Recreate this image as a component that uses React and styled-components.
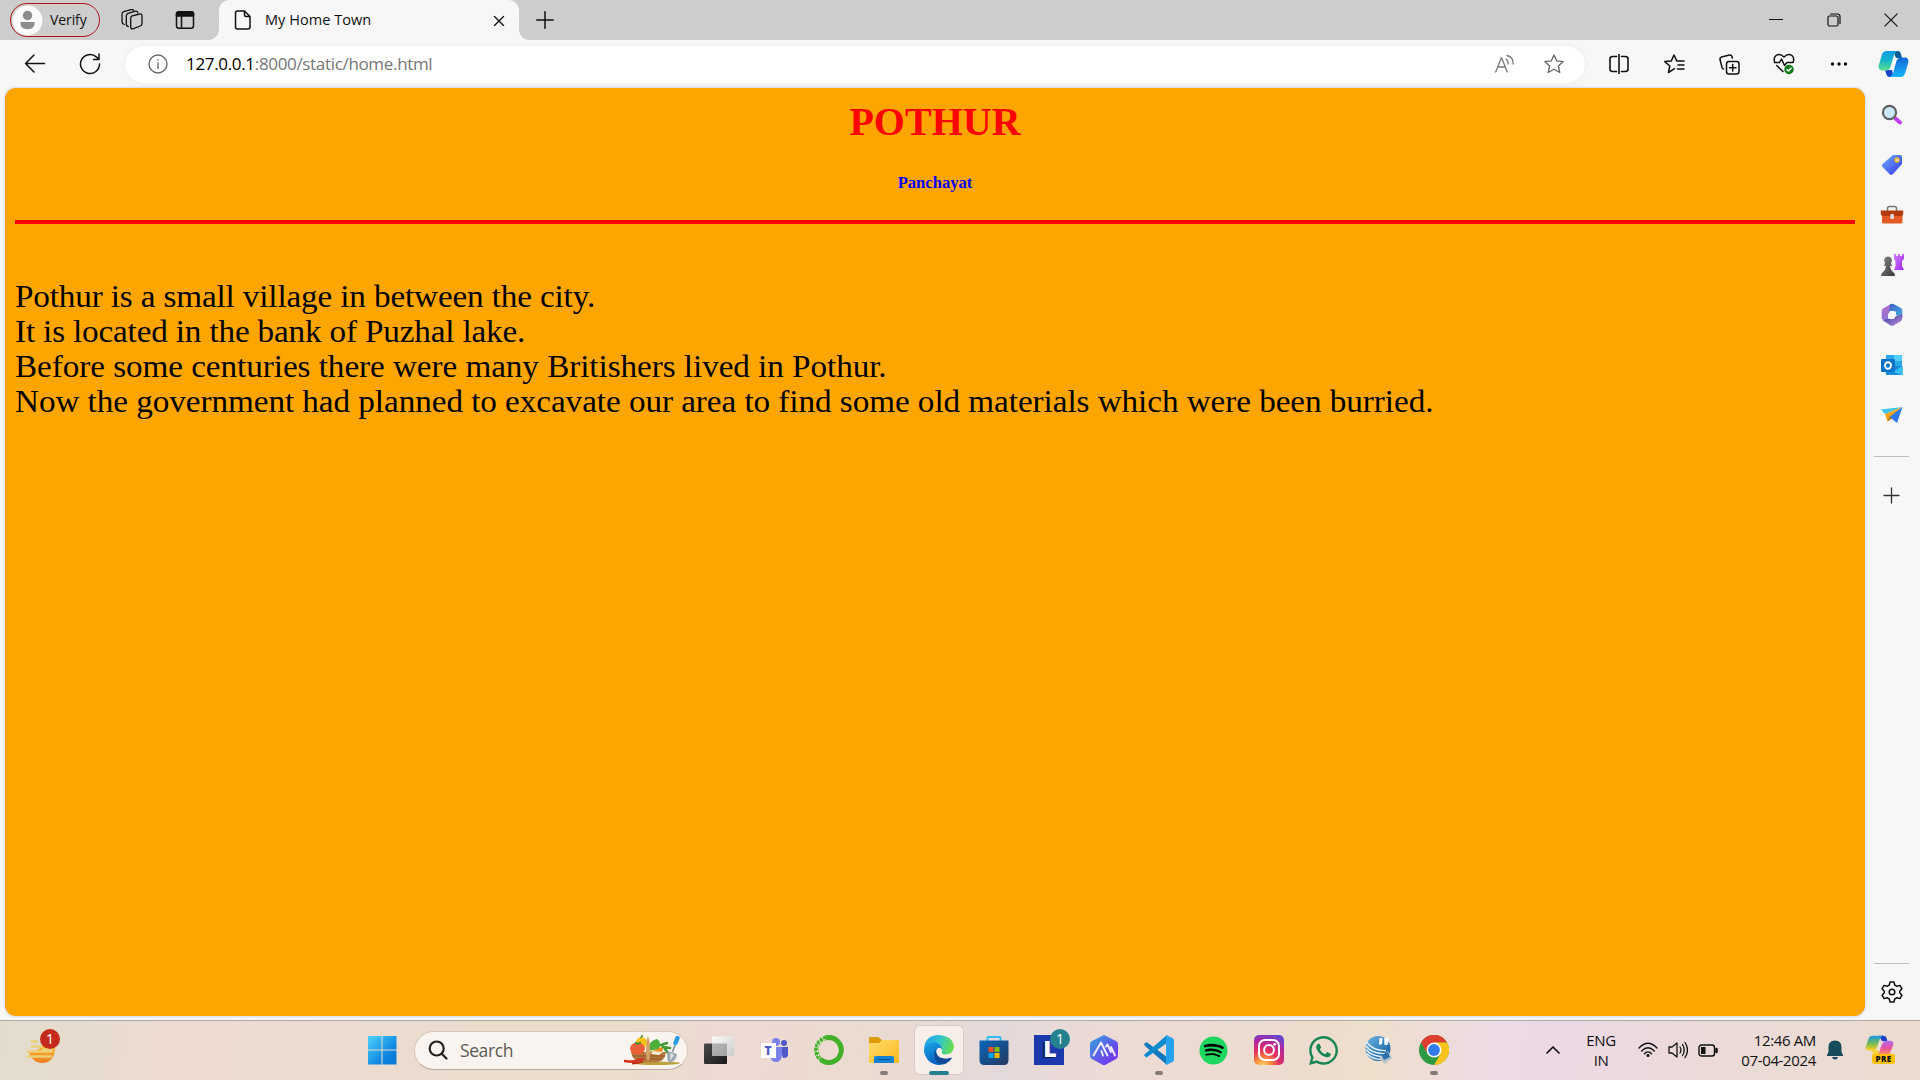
import React from "react";
import styled, { createGlobalStyle } from "styled-components";
import { FaSpotify, FaWhatsapp } from "react-icons/fa";

const ui = `"Open Sans", "Noto Sans", sans-serif`;

const Global = createGlobalStyle`
  html, body { margin: 0; padding: 0; overflow: hidden; }
  * { box-sizing: border-box; }
  svg { display: block; flex: none; }
`;

const Screen = styled.div`
  width: 1920px;
  height: 1080px;
  display: flex;
  flex-direction: column;
  background: #f7f7f7;
  font-family: ${ui};
  color: #111;
  overflow: hidden;
`;

/* ---------- tab strip ---------- */
const TabStrip = styled.header`
  height: 40px;
  background: #cdcdcd;
  display: flex;
  align-items: center;
  padding-left: 10px;
`;
const Profile = styled.div`
  width: 90px;
  height: 34px;
  border: 1.5px solid #b3151b;
  border-radius: 17px;
  display: flex;
  align-items: center;
  gap: 7px;
  padding-left: 1px;
  margin-right: 20px;
`;
const Label = styled.span`
  font-size: ${(p) => p.$size || 14}px;
  letter-spacing: ${(p) => p.$track || 0}px;
  color: ${(p) => p.$color || "#111"};
  line-height: 20px;
  white-space: nowrap;
`;
const StripIcon = styled.div`
  width: 24px;
  height: 24px;
  display: flex;
  align-items: center;
  justify-content: center;
  margin-right: ${(p) => p.$after || 0}px;
`;
const Tab = styled.div`
  position: relative;
  width: 300px;
  height: 40px;
  border-radius: 10px 10px 0 0;
  background: #f7f7f7;
  display: flex;
  align-items: center;
  padding: 0 14px 0 15px;
  gap: 13px;
  &::before, &::after {
    content: "";
    position: absolute;
    bottom: 0;
    width: 10px;
    height: 10px;
  }
  &::before { left: -10px; background: radial-gradient(circle at 0 0, transparent 9.5px, #f7f7f7 10px); }
  &::after { right: -10px; background: radial-gradient(circle at 100% 0, transparent 9.5px, #f7f7f7 10px); }
  > svg:last-child { margin-left: auto; }
`;
const WindowButtons = styled.div`
  margin-left: auto;
  display: flex;
`;
const WindowButton = styled.div`
  width: 57.5px;
  height: 40px;
  display: flex;
  align-items: center;
  justify-content: center;
`;

/* ---------- toolbar ---------- */
const Toolbar = styled.div`
  height: 48px;
  display: flex;
  align-items: center;
  padding-left: 7px;
`;
const Slot = styled.div`
  width: ${(p) => p.$w || 55}px;
  height: 48px;
  display: flex;
  align-items: center;
  justify-content: center;
`;
const Address = styled.div`
  width: 1460px;
  height: 37px;
  border-radius: 19px;
  background: #fff;
  box-shadow: 0 0 5px rgba(0, 0, 0, 0.06);
  margin-left: 8px;
  display: flex;
  align-items: center;
  padding: 0 21px 0 23px;
`;
const Url = styled.span`
  font-size: 17px;
  line-height: 24px;
  letter-spacing: -0.33px;
  color: #767676;
  margin-left: 18px;
  margin-right: auto;
  padding-bottom: 1px;
  b { font-weight: 400; color: #000; }
`;
const AddressIcon = styled.div`
  margin-left: ${(p) => p.$gap || 0}px;
`;

/* ---------- page ---------- */
const Main = styled.div`
  height: 932px;
  display: flex;
  padding-left: 5px;
`;
const Page = styled.main`
  width: 1860px;
  height: 928px;
  border-radius: 11px;
  background: #ffa500;
  box-shadow: 0 0 3px rgba(60, 80, 140, 0.35);
  padding: 11px 10px 10px;
  font-family: "Liberation Serif", serif;
`;
const Title = styled.h1`
  margin: 0;
  font-size: 40px;
  line-height: 46px;
  color: #f00;
  text-align: center;
`;
const Subtitle = styled.h5`
  margin: 28px 0 0;
  font-size: 16.6px;
  line-height: 19px;
  color: #00f;
  text-align: center;
`;
const Rule = styled.hr`
  margin: 28px 0 55px;
  border: 0;
  height: 4px;
  background: #f00;
`;
const Line = styled.p`
  margin: 0;
  width: max-content;
  font-size: 31px;
  line-height: 35px;
  letter-spacing: ${(p) => p.$track}px;
  color: #000;
  white-space: nowrap;
  transform: scaleX(1.07);
  transform-origin: 0 0;
`;

const Sidebar = styled.aside`
  width: 53px;
  height: 928px;
  padding: 2px 0 13px;
  display: flex;
  flex-direction: column;
  align-items: center;
`;
const SideItem = styled.div`
  height: 50px;
  display: flex;
  align-items: center;
  justify-content: center;
`;
const Divider = styled.div`
  width: 35px;
  height: 1px;
  background: #bdbdbd;
  margin: ${(p) => p.$m};
`;

/* ---------- taskbar ---------- */
const Taskbar = styled.footer`
  height: 60px;
  border-top: 1px solid #b2aaa4;
  display: flex;
  align-items: center;
  padding-left: 13px;
  background: linear-gradient(96deg, #e3dccd 0, #e5dccd 80px, #eddccf 160px, #ecdccf 400px, #ebdccc 620px, #eddad4 730px, #ecdbcf 850px, #e4d9da 1000px, #ecdad5 1110px, #eedecc 1370px, #eedae5 1490px, #edd9e4 1560px, #ebdad8 1700px, #ebdcd2 1860px);
`;
const Cell = styled.div`
  position: relative;
  width: 55px;
  height: 59px;
  padding-bottom: 1px;
  display: flex;
  align-items: center;
  justify-content: center;
`;
const Tile = styled.div`
  width: 48px;
  height: 48px;
  border-radius: 5px;
  background: #f7eee9;
  box-shadow: 0 0 1px 1px rgba(120, 90, 80, 0.12);
  display: flex;
  align-items: center;
  justify-content: center;
`;
const Running = styled.i`
  position: absolute;
  bottom: 5px;
  left: 50%;
  width: ${(p) => (p.$active ? 20 : 8)}px;
  height: 4px;
  border-radius: 2px;
  transform: translateX(-50%);
  background: ${(p) => (p.$active ? "#25808f" : "#857b77")};
`;
const Badge = styled.span`
  position: absolute;
  top: ${(p) => p.$top}px;
  left: ${(p) => p.$left}px;
  width: 20px;
  height: 20px;
  border-radius: 50%;
  background: ${(p) => p.$bg};
  color: #fff;
  font-size: 14px;
  line-height: 20px;
  text-align: center;
`;
const Search = styled.div`
  width: 274px;
  height: 39px;
  border-radius: 20px;
  background: #f9f4f0;
  border: 1px solid #d9c9bd;
  border-bottom-color: #baaaa0;
  margin: 0 3px 1px 5px;
  display: flex;
  align-items: center;
  padding: 0 6px 0 13px;
  > svg:last-child { margin-left: auto; }
`;
const SearchText = styled.span`
  font-size: 17.5px;
  letter-spacing: -0.4px;
  color: #5b5856;
  margin-left: 12px;
`;
const Gap = styled.div`
  width: ${(p) => p.$w}px;
`;
const Tray = styled.div`
  margin-left: auto;
  height: 59px;
  display: flex;
  align-items: center;
  padding: 0 25px 1px 0;
`;
const TwoLines = styled.div`
  width: ${(p) => p.$w}px;
  text-align: ${(p) => p.$align};
  font-size: 15px;
  line-height: 20px;
  letter-spacing: ${(p) => p.$track || 0}px;
  white-space: nowrap;
  padding-bottom: 1px;
`;
const TrayIcon = styled.div`
  width: ${(p) => p.$w}px;
  display: flex;
  justify-content: center;
`;

const Ico = ({ w = 20, h, s = "#111", sw = 1.4, box, children }) => (
  <svg width={w} height={h || w} viewBox={box || `0 0 ${w} ${h || w}`} fill="none" stroke={s} strokeWidth={sw} strokeLinecap="round" strokeLinejoin="round">
    {children}
  </svg>
);

const Grad = ({ id, a, b, c, x2 = 1, y2 = 1 }) => (
  <linearGradient id={id} x1="0" y1="0" x2={x2} y2={y2}>
    <stop offset="0" stopColor={a} />
    {c && <stop offset=".5" stopColor={c} />}
    <stop offset="1" stopColor={b} />
  </linearGradient>
);

const starPath = "M10 1 L12.7 6.9 L19.2 7.6 L14.4 12 L15.8 18.5 L10 15.3 L4.2 18.5 L5.6 12 L.8 7.6 L7.3 6.9 Z";

function Tabs() {
  return (
    <TabStrip>
      <Profile>
        <svg width="31" height="31" viewBox="0 0 31 31">
          <circle cx="15.5" cy="15.5" r="15" fill="#fafafa" />
          <circle cx="15.5" cy="10.5" r="4.7" fill="#8c8c8c" />
          <path d="M8.5 17h14v1.5c0 3.8-3 5.7-7 5.7s-7-1.900-7-5.700z" fill="#8c8c8c" />
        </svg>
        <Label $size={14} $track={-0.1}>Verify</Label>
      </Profile>
      <StripIcon $after={29}>
        <Ico w={22} sw={1.3}>
          <path d="M10.500 7.200 L18.600 5 Q21 4.600 21 7 V14.500 Q21 16.300 19.200 17 L12.500 19.700 Q9.700 20.500 9.700 17.800 V9 Q9.700 7.600 10.500 7.200 Z" />
          <path d="M7.300 17.500 Q5.300 17.300 5.300 15 V7 Q5.300 5 7 4.400 L14.500 2.200 Q16.500 2 16.800 3.600" />
          <path d="M3.300 15.500 Q1 14.800 1 12.500 V5.500 Q1 3.500 2.800 2.700 L10 .7 Q12 .3 12.600 1.300" />
        </Ico>
      </StripIcon>
      <StripIcon $after={22}>
        <Ico w={20} sw={1.5}>
          <rect x="1.500" y="1.800" width="17" height="16.500" rx="2.500" />
          <path d="M1.500 6 V4 Q1.500 1.800 4 1.800 H16 Q18.500 1.800 18.500 4 V6 Z" fill="#111" />
          <path d="M6.500 6 V18" />
        </Ico>
      </StripIcon>
      <Tab>
        <Ico w={18} h={20} sw={1.5}>
          <path d="M3.500 1 H10.500 L16 6.500 V17 Q16 19 14 19 H3.500 Q1.500 19 1.500 17 V3 Q1.500 1 3.500 1 Z M10.500 1 V5 Q10.500 6.500 12 6.500 H16" />
        </Ico>
        <Label $size={14.5} $track={0.04}>My Home Town</Label>
        <Ico w={12} h={11}><path d="M1.500 1.500 L10.500 10.500 M10.500 1.500 L1.500 10.500" /></Ico>
      </Tab>
      <Gap $w={17} />
      <Ico w={18} sw={1.5}><path d="M9 .8 V17.200 M.8 9 H17.200" /></Ico>
      <WindowButtons>
        <WindowButton><Ico w={14} sw={1.2}><path d="M.5 6.500 H13.500" /></Ico></WindowButton>
        <WindowButton>
          <Ico w={14} sw={1.2}>
            <rect x="1" y="3" width="10" height="10" rx="1.500" />
            <path d="M3.500 1 H10.500 Q13 1 13 3.500 V10.500" />
          </Ico>
        </WindowButton>
        <WindowButton><Ico w={14} sw={1.2}><path d="M.8 .8 L13.200 13.200 M13.200 .8 L.8 13.200" /></Ico></WindowButton>
      </WindowButtons>
    </TabStrip>
  );
}

function NavBar() {
  return (
    <Toolbar>
      <Slot><Ico w={22} sw={1.5}><path d="M20.500 10.500 H1.500 M10 2 L1.500 10.500 L10 19" /></Ico></Slot>
      <Slot>
        <Ico w={22} sw={1.5}><path d="M20.500 11 A9.500 9.500 0 1 1 17.500 4.100 L20 6.300 M20 1 V6.500 H14.500" /></Ico>
      </Slot>
      <Address>
        <Ico w={20} s="#6c6c6c"><circle cx="10" cy="10" r="9" /><path d="M10 9 V14.500 M10 5.600 V5.900" /></Ico>
        <Url><b>127.0.0.1</b>:8000/static/home.html</Url>
        <AddressIcon>
          <Ico w={20} s="#777" sw={1.300}><path d="M.7 18 L6.500 3.500 L12.300 18 M2.700 13 H10.300 M11 5 Q13.500 7 13 10 M12 1.500 Q18.500 3 18 10" /></Ico>
        </AddressIcon>
        <AddressIcon $gap={29}><Ico s="#666" sw={1.3}><path d={starPath} /></Ico></AddressIcon>
      </Address>
      <Gap $w={6.5} />
      <Slot>
        <Ico w={20} sw={1.600}><path d="M7.500 2.500 H3.500 Q1 2.500 1 5 V15 Q1 17.500 3.500 17.500 H7.500 M12.500 2.500 H16.500 Q19 2.500 19 5 V15 Q19 17.500 16.500 17.500 H12.500 M10 .5 V19.500" /></Ico>
      </Slot>
      <Slot>
        <Ico w={21} h={20} sw={1.500}><path d="M10.500 14.700 L4.500 18.500 L5.800 12 L.8 7.600 L7.300 6.900 L10 1 L12.700 6.900 H20 M14 11 H20 M13.500 15 H20" /></Ico>
      </Slot>
      <Slot>
        <Ico w={21} sw={1.500}>
          <rect x="7.500" y="7.500" width="12.500" height="12.500" rx="2.500" />
          <path d="M13.700 10.500 V17 M10.500 13.700 H17 M4.500 15 Q3.500 15 3 13.500 L1 5.500 Q.7 3.500 2.500 3 L10.500 1 Q12.500 .8 13 2.500 L13.300 4" />
        </Ico>
      </Slot>
      <Slot>
        <Ico w={22} sw={1.500}>
          <path d="M1.700 9 Q.2 5 3 2.500 Q7 -.2 11 4 Q15 -.2 19 2.500 Q21.500 5 20.300 9 M1.500 9.500 H6.500 L8.500 6 L11.500 12.500 L14 9.500 H20 M3.700 12.500 L10 18.500" />
          <circle cx="16" cy="16.500" r="4.700" fill="#0f7b16" stroke="none" />
          <path d="M14 16.700 L15.400 18 L18 15.200" stroke="#fff" />
        </Ico>
      </Slot>
      <Slot><Ico w={18} s="none"><g fill="#111"><circle cx="2.500" cy="9" r="1.700" /><circle cx="9" cy="9" r="1.700" /><circle cx="15.500" cy="9" r="1.700" /></g></Ico></Slot>
      <Slot $w={53}><Copilot w={31} h={28} /></Slot>
    </Toolbar>
  );
}

const Copilot = ({ w, h, pre }) => (
  <svg width={w} height={h} viewBox="0 0 31 28" preserveAspectRatio="none">
    <defs>
      {pre ? (
        <>
          <Grad id="cpA" a="#1998e5" c="#6cb85a" b="#ffd21c" x2={0} />
          <Grad id="cpB" a="#b46cf5" c="#e553a1" b="#ff9b59" x2={0} />
        </>
      ) : (
        <>
          <Grad id="coA" a="#0c9ee8" c="#17b5c7" b="#60df91" x2={0} />
          <Grad id="coB" a="#1267d5" b="#17b6fa" x2={0} />
        </>
      )}
    </defs>
    <path d="M15 1 H19.500 Q22.300 1 23 4 L24 8 H18 L15 1Z" fill={pre ? "#183fc4" : "#0b5e91"} />
    <path d="M15.500 27 H12 Q9 27 8.300 24 L7 20 H14Z" fill={pre ? "#ffd33f" : "#1246c8"} />
    <path d="M8.500 1 H19 Q16.700 2 15.800 5.500 L12.800 16 Q11.700 20.500 8 20.500 H4.500 Q-.6 20.500 1 14.500 L3.800 5 Q5 1 8.500 1Z" fill={`url(#${pre ? "cpA" : "coA"})`} />
    <path d="M22.500 27 H12 Q14.300 26 15.200 22.500 L18.200 12 Q19.300 7.500 23 7.500 H26.500 Q31.600 7.500 30 13.500 L27.200 23 Q26 27 22.500 27Z" fill={`url(#${pre ? "cpB" : "coB"})`} />
  </svg>
);

function SideIcons() {
  return (
    <Sidebar>
      <SideItem>
        <svg width="22" height="22" viewBox="0 0 22 22">
          <path d="M14.500 14.500 L19 18.500" stroke="#c13df1" strokeWidth="4" strokeLinecap="round" />
          <circle cx="8.500" cy="8.500" r="6.600" fill="#c9e8fc" stroke="#626262" strokeWidth="2.200" />
        </svg>
      </SideItem>
      <SideItem>
        <svg width="22" height="22" viewBox="0 0 22 22">
          <defs><Grad id="tag" a="#69b3ff" b="#3a31ef" /></defs>
          <path d="M12 1 H19 Q21 1 21 3 V10 L11.500 20.500 Q10 21.500 8.700 20.300 L1.300 12.800 Q.3 11.500 1.300 10.300Z" fill="url(#tag)" />
          <circle cx="16" cy="6" r="2" fill="#d9d4ce" stroke="#f4bd16" strokeWidth="1.300" />
        </svg>
      </SideItem>
      <SideItem>
        <svg width="24" height="20" viewBox="0 0 24 20">
          <path d="M7.500 6 V3.500 Q7.500 1.500 9.500 1.500 H14.500 Q16.500 1.500 16.500 3.500 V6" fill="none" stroke="#777" strokeWidth="1.500" />
          <rect x="2" y="6" width="20.500" height="12.500" rx="1.500" fill="#e65a26" />
          <path d="M.8 5.500 H23.200 V9 Q23 11 20 11 H4 Q1 11 .8 9Z" fill="#b23a0c" />
          <rect x="10.300" y="9" width="3.600" height="5" rx="1" fill="#ddd" />
        </svg>
      </SideItem>
      <SideItem>
        <svg width="24" height="24" viewBox="0 0 24 24">
          <defs><Grad id="pawn" a="#898989" b="#383838" /><Grad id="rook" a="#cc83ff" b="#a522f0" /></defs>
          <path d="M14 1 H16 V3 H18 V1 H20 V3 H22 V1 H24 V6 L22 8 V13 L24 17 H14 L15.500 13 V8 L14 6Z" fill="url(#rook)" />
          <path d="M8 3.500 A4 4 0 0 1 11 10 L12 13 H10 Q10.500 17 13 19 Q15 20 15 23 H1 Q1 20 3 19 Q5.500 17 6 13 H4 L5 10 A4 4 0 0 1 8 3.500Z" fill="url(#pawn)" />
        </svg>
      </SideItem>
      <SideItem>
        <svg width="22" height="24" viewBox="0 0 22 24">
          <defs><Grad id="m1" a="#b36acb" b="#8c78d7" x2={0} /><Grad id="m2" a="#3f5cc5" b="#3fb6e4" /><Grad id="m3" a="#303aa2" b="#ba8dd7" /></defs>
          <path d="M10 1 L2 5.500 Q.7 6.500 .7 8 V16 L7 19 L7 12 L14 6Z" fill="url(#m1)" />
          <path d="M9 1.600 Q11 .3 13 1.200 L20 5 Q21.300 6 21.300 8 V15 L15 12 L15 8.500 L8 9Z" fill="url(#m2)" />
          <path d="M1.500 17 L9.500 22.500 Q11 23.300 13 22.300 L20 18 Q21.300 17 21.300 14 V11 L14 13.500 L9 15.500Z" fill="url(#m3)" />
          <path d="M9 8 H13 L15.200 12 L13 16 H9 L6.800 12Z" fill="#f7f7f7" />
        </svg>
      </SideItem>
      <SideItem>
        <svg width="22" height="22" viewBox="0 0 22 22">
          <rect x="5" y="1" width="16" height="13" fill="#28a8ea" />
          <path d="M13 1 H21 V7 H13Z" fill="#50d0fa" />
          <path d="M4 12 H21.500 V21 H5Z" fill="#168fdb" />
          <path d="M21.500 12 L12 18 L21.500 21Z" fill="#37c1f2" />
          <rect x="0" y="5" width="14" height="13" rx="1" fill="#0872c9" />
          <ellipse cx="7" cy="11.500" rx="3" ry="3.300" fill="none" stroke="#fff" strokeWidth="1.900" />
        </svg>
      </SideItem>
      <SideItem>
        <svg width="22" height="18" viewBox="0 0 22 18">
          <path d="M21.500 1 L0 3.500 L4 8Z" fill="#3cc4f3" />
          <path d="M21.500 1 L4 8 L6.500 15.500Z" fill="#f1a51b" />
          <path d="M21.500 1 L16 17 L8.500 11Z" fill="#2d79ec" />
          <path d="M6.500 15.500 L8.500 10.500 L11 12.500Z" fill="#b97222" />
        </svg>
      </SideItem>
      <Divider $m="16px 0 30px" />
      <Ico w={17} s="#333" sw={1.300}><path d="M8.500 1 V16 M1 8.500 H16" /></Ico>
      <Divider $m="auto 0 17px" />
      <Ico w={22} sw={1.500}>
        <path d="M9 1 H13 L13.700 4 L16 5.300 L19 4.400 L21 7.800 L18.800 10 V12 L21 14.200 L19 17.600 L16 16.700 L13.700 18 L13 21 H9 L8.300 18 L6 16.700 L3 17.600 L1 14.200 L3.200 12 V10 L1 7.800 L3 4.400 L6 5.300 L8.300 4Z" />
        <circle cx="11" cy="11" r="2.800" />
      </Ico>
    </Sidebar>
  );
}

const Weather = () => (
  <svg width="30" height="28" viewBox="0 0 30 28">
    <defs><Grad id="sun" a="#f9c12f" b="#ed7a20" x2={0} /></defs>
    <path d="M2 15 Q14 16 16 9 H29 Q30 27 15 27 Q6 26 2 15Z" fill="url(#sun)" />
    <path d="M6 5.500 H11 M6 10.500 H16 M1.500 15.500 H24 Q27 15.500 25.500 13.500 Q22 12 17 14 M1.500 20.500 H25" stroke="#ecd078" strokeWidth="2.500" strokeLinecap="round" fill="none" />
  </svg>
);

const Windows = () => (
  <svg width="30" height="30" viewBox="0 0 30 30">
    <defs><linearGradient id="win" x1="0" y1="0" x2="30" y2="30" gradientUnits="userSpaceOnUse"><stop stopColor="#50d5ff" /><stop offset=".7" stopColor="#0b82dd" /><stop offset="1" stopColor="#0875d1" /></linearGradient></defs>
    <path d="M1 1H14.500V14.500H1Z M15.500 1H29.500V14.500H15.500Z M1 15.500H14.500V29.500H1Z M15.500 15.500H29.500V29.500H15.500Z" fill="url(#win)" />
  </svg>
);

const Basket = () => (
  <svg width="57" height="32" viewBox="0 0 57 32">
    <ellipse cx="32" cy="29.300" rx="24" ry="1.800" fill="#c0a23c" />
    <path d="M7 18 H42 Q41 28.500 30 28.500 H18 Q8 27 7 18Z" fill="#b8783f" />
    <path d="M9 22 H41 M12 25 H38" stroke="#8b5226" />
    <circle cx="17.500" cy="8.500" r="5.500" fill="#f6c416" />
    <path d="M17 4 L18.500 1" stroke="#47842d" strokeWidth="1.600" />
    <ellipse cx="13.500" cy="14.500" rx="7.500" ry="6" fill="#ec6038" />
    <path d="M11 8.500 L13.500 10 L17 8.500" stroke="#3f8a34" strokeWidth="1.600" fill="none" />
    <path d="M24 17 Q25 6 33 5 Q38 8 35 15Z" fill="#4faf3b" />
    <path d="M26 18 L40 12 L38 18Z" fill="#f38c1b" />
    <path d="M37 11 L43 9 M39 13 L46 14 M41 15 L44 19" stroke="#3f9c35" strokeWidth="2.600" strokeLinecap="round" />
    <path d="M29 17 L39 18 L35 21 L27 20Z" fill="#f5edd2" />
    <path d="M22.500 26 Q21 8 24 2 Q27 8 25.500 26Z" fill="#d2a266" />
    <path d="M53.500 4 L51.500 9" stroke="#2b9be4" strokeWidth="4.500" strokeLinecap="round" />
    <path d="M51 11 L48.500 18" stroke="#8798a5" strokeWidth="1.800" />
    <path d="M44 17 L53 20 Q53 27 45 29 Q42 25 44 17Z" fill="#9caab4" />
    <path d="M46.500 19 L50 21 L46 27Z" fill="#d9e1e4" />
    <path d="M1 27 Q10 29 18 25" stroke="#d8321e" strokeWidth="2.600" fill="none" strokeLinecap="round" />
    <path d="M8 29.500 Q14 29.500 19 27.500" stroke="#bb2015" strokeWidth="1.800" fill="none" />
  </svg>
);

const TaskView = () => (
  <svg width="30" height="30" viewBox="0 0 30 30">
    <defs><Grad id="tv1" a="#4a4a4a" b="#191919" /><Grad id="tv2" a="#fff" b="#c9c9c9" /></defs>
    <rect x="0" y="8.500" width="23" height="20.500" rx="1" fill="url(#tv1)" />
    <rect x="8" y="1.500" width="22" height="19.500" rx="1" fill="url(#tv2)" opacity=".88" />
    <path d="M8 8.500 H23 V21 H8Z" fill="#777" opacity=".4" />
  </svg>
);

const TeamsMark = styled.div`
  position: relative;
  width: 28px;
  height: 28px;
`;
const TeamsLetter = styled.span`
  position: absolute;
  left: 1px;
  top: 7px;
  width: 15px;
  height: 15px;
  background: #fff;
  color: #5059c9;
  font: 800 12px/15px ${ui};
  text-align: center;
`;
const Teams = () => (
  <TeamsMark>
    <svg width="28" height="28" viewBox="0 0 28 28">
      <circle cx="16" cy="6" r="4" fill="#7b83eb" /><circle cx="24" cy="7" r="3" fill="#5059c9" />
      <path d="M20 11 H28 V19 Q28 22 23 22Z" fill="#5059c9" />
      <path d="M10 11 H22 V20 Q21 26 16 26 Q11 26 10 20Z" fill="#7b83eb" />
    </svg>
    <TeamsLetter>T</TeamsLetter>
  </TeamsMark>
);

const Anaconda = () => (
  <svg width="30" height="30" viewBox="0 0 30 30" fill="none" stroke="#43b02a">
    <path d="M12 2.800 A12.500 12.500 0 1 1 7 24.800" strokeWidth="5" />
    <path d="M12 2.800 A12.500 12.500 0 0 0 7 24.800" strokeWidth="4.500" strokeDasharray="3 .7" />
    <path d="M11 4.500 A11.500 11.500 0 0 0 6.500 23" strokeWidth="1.200" strokeDasharray="2 2.500" stroke="#f4efe8" />
    <path d="M9 1.800 A14 14 0 0 0 5 26" strokeWidth="1.200" strokeDasharray="1.500 2.500" stroke="#f4efe8" />
  </svg>
);

const Folder = () => (
  <svg width="30" height="28" viewBox="0 0 30 28">
    <defs><Grad id="fo" a="#ffdc6b" b="#fcb91f" /></defs>
    <path d="M0 2 Q0 1 1 1 H9 L13 4 V10 H0Z" fill="#dd9c05" />
    <path d="M0 7 H10 L13 4 H29 Q30 4 30 5 V27 H0Z" fill="url(#fo)" />
    <path d="M5 27 V22 Q5 20 7 20 H23 Q25 20 25 22 V27Z" fill="#1383d2" /><path d="M9 23.500 H21" stroke="#08579a" />
  </svg>
);

const Edge = () => (
  <svg width="30" height="30" viewBox="0 0 30 30">
    <defs>
      <linearGradient id="eg" x1="0" y1=".2" x2="1" y2=".4"><stop stopColor="#239ee2" /><stop offset=".5" stopColor="#2fc3d2" /><stop offset="1" stopColor="#66df4e" /></linearGradient>
      <Grad id="eb" a="#1aa8e8" b="#0861bf" x2={0.4} />
    </defs>
    <path d="M0 14 Q1 0 15 0 Q29 1 30 12 Q29 20 20 19.500 Q16 18.500 18 16 Q19 10 12 8 Q4 7 0 14Z" fill="url(#eg)" />
    <path d="M0 14 Q3 7 10 7 Q18 8 18 15 Q15 11 12.500 15 Q10 23 17 28 L17.500 29.800 Q4 31 0 17Z" fill="url(#eb)" />
    <path d="M13 13.500 Q7 20 13 27 Q17 31 22 28.500 Q26 26.500 28 23 Q27 22 25.500 23 Q14 25 12.500 16Z" fill="#104c98" />
    <path d="M18 15 Q15 10.500 12.500 15 Q11.500 19 15.500 22 Q20 24.500 27 22.500 L28.500 18 Q24 21 19 19.500 Q16.500 18.500 18 15Z" fill="#f7eee9" />
  </svg>
);

const Store = () => (
  <svg width="30" height="30" viewBox="0 0 30 30">
    <defs><Grad id="st" a="#0a66bb" b="#24395d" /></defs>
    <path d="M8.500 6 V3 Q8.500 2 9.500 2 H20.500 Q21.500 2 21.500 3 V6" fill="none" stroke="#31bdf0" strokeWidth="2" />
    <path d="M.5 5.500 H29.500 V25 Q29.500 30 25 30 H5 Q.5 30 .5 25Z" fill="url(#st)" />
    <path d="M9.500 12 H14.500 V17 H9.500Z" fill="#f25022" /><path d="M15.500 12 H20.500 V17 H15.500Z" fill="#7fba00" />
    <path d="M9.500 18 H14.500 V23 H9.500Z" fill="#00a4ef" /><path d="M15.500 18 H20.500 V23 H15.500Z" fill="#ffb900" />
  </svg>
);

const LTile = styled.div`
  width: 30px;
  height: 30px;
  background: #1b39ad;
  color: #fff;
  font: 800 23px/27px ${ui};
  text-align: center;
  padding-left: 3px;
  text-shadow: -2px 1px 0 #0a1e59;
`;

const Hex = () => (
  <svg width="30" height="32" viewBox="0 0 30 32">
    <defs><Grad id="hx" a="#32a8dd" c="#5c5fe8" b="#7c22f2" /></defs>
    <path d="M15 1 L27 7 Q29 8 29 10 V21 Q29 24 27 25 L17 30.500 Q15 31.500 13 30.500 L3 25 Q1 24 1 21 V10 Q1 8 3 7Z" fill="url(#hx)" />
    <path d="M4.500 21.500 L12 8.500 L18.500 21.500 M12.500 17 L14 21.500 M17 12.500 L18.500 10.500 L22 18 M22 13 L26 21.500" fill="none" stroke="#f2edff" strokeWidth="1.900" strokeLinecap="round" strokeLinejoin="round" />
  </svg>
);

const VSCode = () => (
  <svg width="30" height="30" viewBox="0 0 30 30">
    <path d="M0 9 L2.500 7 L23 22 V30 L1 11Z" fill="#1379bd" />
    <path d="M0 20.500 L2.500 22.500 L23 8 V0 L1 19Z" fill="#0c8bd0" />
    <path d="M22 0 L28.500 3 Q30 4 30 5.500 V24.500 Q30 26 28.500 27 L22 30Z" fill="#27a2ee" />
  </svg>
);

const Spotify = styled.div`
  width: 29px;
  height: 29px;
  border-radius: 50%;
  background: radial-gradient(#000 65%, transparent 67%);
  color: #1ed760;
`;

const Insta = () => (
  <svg width="30" height="30" viewBox="0 0 30 30">
    <defs>
      <radialGradient id="ig" cx=".3" cy="1.050" r="1.100"><stop stopColor="#fedc69" /><stop offset=".25" stopColor="#fb8b3a" /><stop offset=".5" stopColor="#e42f5f" /><stop offset=".8" stopColor="#b027a0" /><stop offset="1" stopColor="#6a45cf" /></radialGradient>
    </defs>
    <rect width="30" height="30" rx="5" fill="url(#ig)" />
    <rect x="5" y="5" width="20" height="20" rx="6" fill="none" stroke="#fff" strokeWidth="2" />
    <circle cx="15" cy="15" r="4.900" fill="none" stroke="#fff" strokeWidth="2" /><circle cx="20.700" cy="9.300" r="1.400" fill="#fff" />
  </svg>
);

const Globe = () => (
  <svg width="30" height="30" viewBox="0 0 30 30">
    <defs><Grad id="gl" a="#6fb6e0" b="#07549b" /></defs>
    <circle cx="14" cy="13.500" r="12.500" fill="url(#gl)" />
    <path d="M2 11 Q8 19 21 18.500 M2 14.500 Q8 22 20 21.500 M3 18.500 Q9 25 19 24.500 M2.500 7 Q9 16 22 15.500" fill="none" stroke="#e6f1f8" strokeWidth="1.300" />
    <path d="M15.500 3 L18.500 3 L18 9 L15 10Z M20 3.500 L25 2 L23.500 10 L20.500 10Z" fill="#f4f8fb" />
    <path d="M15 23 L24 16 L28 23 L21 29Z" fill="#b8c1c8" /><path d="M17.500 20 L24 17 L26 22 L20 25Z" fill="#2d71a9" />
  </svg>
);

const Chrome = () => (
  <svg width="30" height="30" viewBox="0 0 30 30">
    <circle cx="15" cy="15" r="15" fill="#2b9a42" />
    <path d="M2 7.500 A15 15 0 0 1 28 7.500 H15 L8.500 18.750Z" fill="#df3c2f" />
    <path d="M28 7.500 A15 15 0 0 1 15 30 L21.500 18.750 L15 7.500Z" fill="#fcc31e" />
    <circle cx="15" cy="15" r="7.500" fill="#fff" /><circle cx="15" cy="15" r="5.900" fill="#317bea" />
  </svg>
);

const PreWrap = styled.div`
  position: relative;
  width: 30px;
  height: 30px;
`;
const Pre = styled.span`
  position: absolute;
  left: 7px;
  top: 19px;
  width: 23px;
  height: 10px;
  border-radius: 2px;
  background: #fcc00b;
  color: #111;
  font: 800 8px/10px ${ui};
  letter-spacing: 0.3px;
  text-align: center;
`;

function Task({ children, running, active }) {
  return (
    <Cell>
      {active ? <Tile>{children}</Tile> : children}
      {(running || active) && <Running $active={active} />}
    </Cell>
  );
}

function TaskBar() {
  return (
    <Taskbar>
      <Cell><Weather /><Badge $top={8} $left={27} $bg="#c42b1c">1</Badge></Cell>
      <Gap $w={286} />
      <Cell><Windows /></Cell>
      <Search>
        <Ico w={20} s="#222" sw={2.200}><circle cx="8.700" cy="8.500" r="7" /><path d="M14 14 L18.500 18.500" /></Ico>
        <SearchText>Search</SearchText>
        <Basket />
      </Search>
      <Task><TaskView /></Task>
      <Task><Teams /></Task>
      <Task><Anaconda /></Task>
      <Task running><Folder /></Task>
      <Task active><Edge /></Task>
      <Task><Store /></Task>
      <Cell><LTile>L</LTile><Badge $top={8} $left={29} $bg="#25808f">1</Badge></Cell>
      <Task><Hex /></Task>
      <Task running><VSCode /></Task>
      <Task><Spotify><FaSpotify size={29} /></Spotify></Task>
      <Task><Insta /></Task>
      <Task><FaWhatsapp size={33} color="#198754" /></Task>
      <Task><Globe /></Task>
      <Task running><Chrome /></Task>
      <Tray>
        <TrayIcon $w={40}><Ico w={14} h={10} sw={1.700}><path d="M1 8 L7 2 L13 8" /></Ico></TrayIcon>
        <TwoLines $w={56} $align="center" $track={-0.400}>ENG<br />IN</TwoLines>
        <Gap $w={9} />
        <TrayIcon $w={20}>
          <Ico w={20} h={16} sw={1.400}>
            <path d="M1 6 Q10 -3.500 19 6 M3.700 9 Q10 2.500 16.300 9 M6.500 11.700 Q10 8 13.500 11.700" /><circle cx="10" cy="13.500" r="1.500" fill="#111" stroke="none" />
          </Ico>
        </TrayIcon>
        <Gap $w={10} />
        <TrayIcon $w={20}>
          <Ico w={20} h={18} sw={1.300}><path d="M1 6 H4 L9 2 V16 L4 12 H1Z M12 6 Q14 9 12 12 M14.500 3.500 Q18 9 14.500 14.500 M17 1.500 Q22 9 17 16.500" /></Ico>
        </TrayIcon>
        <Gap $w={10} />
        <TrayIcon $w={20}>
          <Ico w={20} h={13} sw={1.400}><rect x="1" y="1" width="15.500" height="11" rx="2.500" /><rect x="3" y="3" width="4.500" height="7" fill="#111" stroke="none" /><path d="M18.500 5 V8" strokeWidth="2.500" /></Ico>
        </TrayIcon>
        <TwoLines $w={98} $align="right" $track={-0.350}>12:46 AM<br />07-04-2024</TwoLines>
        <TrayIcon $w={38}>
          <svg width="16" height="20" viewBox="0 0 16 20">
            <path d="M8 .5 Q14.500 .8 14.500 7 V12 L16 15 V16 H0 V15 L1.500 12 V7 Q1.500 .8 8 .5Z M5 17 H11 Q10.500 19.500 8 19.500 Q5.500 19.500 5 17Z" fill="#164b5b" />
          </svg>
        </TrayIcon>
        <Gap $w={11} />
        <PreWrap><Copilot w={29} h={21} pre /><Pre>PRE</Pre></PreWrap>
      </Tray>
    </Taskbar>
  );
}

const paragraph = [
  ["Pothur is a small village in between the city.", -0.13],
  ["It is located in the bank of Puzhal lake.", -0.15],
  ["Before some centuries there were many Britishers lived in Pothur.", -0.05],
  ["Now the government had planned to excavate our area to find some old materials which were been burried.", -0.05],
];

export default function App() {
  return (
    <Screen>
      <Global />
      <Tabs />
      <NavBar />
      <Main>
        <Page>
          <Title>POTHUR</Title>
          <Subtitle>Panchayat</Subtitle>
          <Rule />
          {paragraph.map(([text, track]) => (
            <Line key={text} $track={track}>{text}</Line>
          ))}
        </Page>
        <SideIcons />
      </Main>
      <TaskBar />
    </Screen>
  );
}
